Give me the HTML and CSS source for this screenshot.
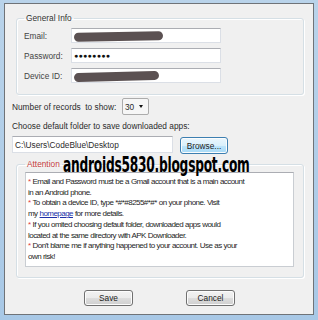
FILE: index.html
```html
<!DOCTYPE html>
<html lang="en">
<head>
<meta charset="UTF-8">
<title>APK Downloader - Settings</title>
<link rel="stylesheet" href="styles.css">
</head>
<body>

<div class="window">

    <fieldset class="group info">
        <legend>General Info</legend>

        <div class="row">
            <label>Email:</label>
            <div class="field"><span class="scribble email"></span></div>
        </div>

        <div class="row">
            <label>Password:</label>
            <div class="field"><span class="dots">&#9679;&#9679;&#9679;&#9679;&#9679;&#9679;&#9679;&#9679;</span></div>
        </div>

        <div class="row">
            <label>Device ID:</label>
            <div class="field"><span class="scribble device"></span></div>
        </div>
    </fieldset>

    <div class="records">
        <span>Number of records&nbsp; to show:</span>
        <div class="select">
            <span>30</span>
            <span class="arrow"></span>
        </div>
    </div>

    <div class="folder-text">Choose default folder to save downloaded apps:</div>

    <div class="folder">
        <div class="path">C:\Users\CodeBlue\Desktop</div>
        <button class="btn browse">Browse...</button>
    </div>

    <fieldset class="group attention">
        <legend>Attention</legend>
        <div class="notes">
            <span class="star">*</span> Email and Password must be a Gmail account that is a main account<br>
            in an Android phone.<br>
            <span class="star">*</span> To obtain a device ID, type *#*#8255#*#* on your phone. Visit<br>
            my <a href="#">homepage</a> for more details.<br>
            <span class="star">*</span> If you omited choosing default folder, downloaded apps would<br>
            located at the same directory with APK Downloader.<br>
            <span class="star">*</span> Don't blame me if anything happened to your account. Use as your<br>
            own risk!
        </div>
    </fieldset>

    <div class="buttons">
        <button class="btn">Save</button>
        <button class="btn">Cancel</button>
    </div>

    <div class="watermark">androids5830.blogspot.com</div>

</div>

</body>
</html>
```

FILE: styles.css
```css
*{
    box-sizing:border-box;
}

body{
    margin:0;
    width:318px;
    height:320px;
    padding:3px 4px 5px 4px;
    background:linear-gradient(180deg,#b9d3ea 0%,#a8c8e6 100%);
    font-family:"Liberation Sans", Arial, sans-serif;
    font-size:8.3px;
    color:#2b2b2b;
    overflow:hidden;
}

.window{
    position:relative;
    width:310px;
    height:312px;
    border:1px solid #6f7378;
    background:#f0f0f0;
    padding-top:9px;
}

/* GROUP BOXES */
.group{
    margin:0 9px 0 11px;
    border:1px solid #d5dfe5;
    border-radius:3px;
    box-shadow:inset 1px 1px 0 #fff, 1px 1px 0 #fff;
    padding:4px 7px 11px 7px;
    min-width:0;
}

.group legend{
    padding:0 2px;
    margin-left:0;
    line-height:11px;
    color:#333;
}

.row{
    display:flex;
    align-items:center;
    height:15px;
    margin-bottom:5px;
}

.row:last-child{
    margin-bottom:0;
}

.row label{
    width:47px;
    color:#444;
}

.field{
    position:relative;
    width:150px;
    height:15px;
    background:#fff;
    border:1px solid #dbdfe6;
    border-top-color:#abadb3;
    display:flex;
    align-items:center;
    padding-left:2px;
}

.scribble{
    display:block;
    height:9px;
    background:#5b5152;
    border-radius:5px;
}

.scribble.email{
    width:89px;
    margin-top:1px;
    transform:rotate(-1deg);
}

.scribble.device{
    width:85px;
    margin-top:2px;
    transform:rotate(-1.5deg);
}

.dots{
    font-size:7px;
    letter-spacing:0.3px;
    color:#111;
}

/* RECORDS */
.records{
    display:flex;
    align-items:center;
    margin:3px 0 0 7px;
    height:17px;
}

.records span:first-child{
    width:110px;
}

.select{
    width:27px;
    height:17px;
    background:#f6f6f6;
    border:1px solid #acacac;
    border-radius:2px;
    display:flex;
    align-items:center;
    justify-content:space-between;
    padding:0 5px 0 2px;
}

.arrow{
    width:0;
    height:0;
    border-left:2.5px solid transparent;
    border-right:2.5px solid transparent;
    border-top:3px solid #111;
}

.folder-text{
    margin:6px 0 0 7px;
    line-height:11px;
}

.folder{
    display:flex;
    align-items:flex-start;
    gap:7px;
    margin:4px 0 0 7px;
}

.path{
    width:161px;
    height:17px;
    background:#fff;
    border:1px solid #dbdfe6;
    border-top-color:#abadb3;
    padding:3px 0 0 2px;
}

/* BUTTONS */
.btn{
    width:49px;
    height:16px;
    padding:0;
    font-family:inherit;
    font-size:8.3px;
    color:#222;
    border:1px solid #707070;
    border-radius:3px;
    background:linear-gradient(180deg,#f2f2f2 0%,#ebebeb 50%,#dddddd 51%,#cfcfcf 100%);
    box-shadow:inset 0 0 0 1px #fcfcfc;
}

.btn.browse{
    margin-top:1px;
    width:48px;
    height:17px;
    border-color:#3c7fb1;
    background:linear-gradient(180deg,#eaf6fd 0%,#d9f0fc 50%,#bee6fd 51%,#a7d9f5 100%);
}

.attention{
    margin-top:5px;
    padding:0 9px 10px 8px;
}

.attention legend{
    color:#c43c3c;
}

.notes{
    margin-top:2px;
    height:95px;
    background:#fff;
    border:1px solid #c9cdd2;
    border-top-color:#abadb3;
    padding:4px 0 0 2px;
    font-size:8px;
    letter-spacing:-0.55px;
    word-spacing:0.3px;
    line-height:10.7px;
    color:#1e1e1e;
    white-space:nowrap;
}

.star{
    color:#e03c3c;
}

.notes a{
    color:#1c2fa8;
}

.buttons{
    display:flex;
    justify-content:center;
    gap:53px;
    margin-top:12px;
    padding-left:1px;
}

/* WATERMARK OVER THE DIALOG */
.watermark{
    position:absolute;
    left:58px;
    top:149px;
    font-family:"DejaVu Sans Condensed", "Liberation Sans", sans-serif;
    font-weight:bold;
    font-size:17px;
    line-height:20px;
    color:#000;
    transform:scale(0.8,1.2);
    transform-origin:left top;
    letter-spacing:-0.3px;
}
```
